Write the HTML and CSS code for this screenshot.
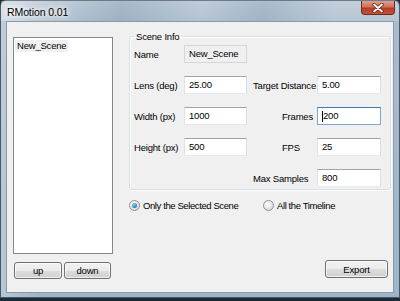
FILE: index.html
```html
<!DOCTYPE html>
<html>
<head>
<meta charset="utf-8">
<link rel="stylesheet" href="styles.css">
</head>
<body>
<div class="window">
  <div class="titlebar">
    <span class="title">RMotion 0.01</span>
    <div class="close"><svg width="14" height="10" viewBox="0 0 14 10"><path d="M3 1.5 L11 8.5 M11 1.5 L3 8.5" stroke="#5a2318" stroke-width="3.4" stroke-linecap="round"/><path d="M3 1.5 L11 8.5 M11 1.5 L3 8.5" stroke="#fff" stroke-width="1.8" stroke-linecap="round"/></svg></div>
  </div>
  <div class="client">
    <div class="left">
      <div class="list"><span class="item">New_Scene</span></div>
      <div class="btnrow">
        <button class="btn up">up</button>
        <button class="btn down">down</button>
      </div>
    </div>
    <div class="right">
      <fieldset class="group">
        <legend>Scene Info</legend>
        <div class="grid">
          <span class="lbl">Name</span>
          <span class="field ro">New_Scene</span>
          <span></span>
          <span></span>

          <span class="lbl">Lens (deg)</span>
          <span class="field">25.00</span>
          <span class="lbl">Target Distance</span>
          <span class="field">5.00</span>

          <span class="lbl">Width (px)</span>
          <span class="field">1000</span>
          <span class="lbl ind">Frames</span>
          <span class="field focus"><span class="caret"></span>200</span>

          <span class="lbl">Height (px)</span>
          <span class="field">500</span>
          <span class="lbl ind">FPS</span>
          <span class="field">25</span>

          <span></span>
          <span></span>
          <span class="lbl">Max Samples</span>
          <span class="field">800</span>
        </div>
      </fieldset>
      <div class="radios">
        <label class="radio first"><span class="dot on"></span>Only the Selected Scene</label>
        <label class="radio"><span class="dot"></span>All the Timeline</label>
      </div>
      <div class="spacer"></div>
      <div class="exportrow"><button class="btn export">Export</button></div>
    </div>
  </div>
</div>
</body>
</html>
```
FILE: styles.css
```css
html, body {
  margin: 0;
  padding: 0;
}
body {
  width: 400px;
  height: 301px;
  background: #1e2a36;
  overflow: hidden;
  font-family: "Liberation Sans", Arial, sans-serif;
  font-size: 9px;
  letter-spacing: -0.2px;
  color: #000;
}
.window {
  width: 400px;
  height: 298px;
  box-sizing: border-box;
  background:
    linear-gradient(90deg, rgba(255,255,255,0.25) 0px, rgba(255,255,255,0) 40px),
    linear-gradient(180deg, #b9c7d4 0px, #a9bccd 21px, #9fb4c8 100%);
  border: 1px solid #4a5866;
  border-top-color: #6d7b88;
  border-radius: 6px 6px 0 0;
  display: flex;
  flex-direction: column;
}
.titlebar {
  height: 20px;
  display: flex;
  align-items: flex-start;
  justify-content: space-between;
  background:
    linear-gradient(100deg, rgba(255,255,255,0.35) 0px, rgba(255,255,255,0.1) 60px, rgba(90,110,130,0.15) 120px, rgba(255,255,255,0.1) 200px, rgba(120,140,160,0.2) 260px, rgba(255,255,255,0.15) 330px);
}
.title {
  margin: 5px 0 0 6px;
  font-size: 10.5px;
  letter-spacing: -0.1px;
  color: #000;
  text-shadow: 0 0 4px #fff, 0 0 6px #fff, 0 0 8px #fff;
}
.close {
  width: 34px;
  height: 14px;
  margin-right: 4px;
  box-sizing: border-box;
  border: 1px solid #6b2a1e;
  border-top: none;
  border-radius: 0 0 4px 4px;
  background: linear-gradient(180deg, #e0a090 0%, #d0705a 45%, #b83c24 55%, #c65238 100%);
  display: flex;
  align-items: center;
  justify-content: center;
}
.client {
  margin: 0 5px;
  height: 272px;
  background: #f0f0f0;
  border: 1px solid #8b9aa8;
  box-sizing: border-box;
  display: flex;
  padding: 15px 0 0 6px;
}
.left {
  width: 100px;
  display: flex;
  flex-direction: column;
}
.list {
  height: 217px;
  box-sizing: border-box;
  background: #fff;
  border: 1px solid #828790;
  padding: 2px 1px;
}
.item {
  display: inline-block;
  background: #f0f0f0;
  padding: 0 2px;
  line-height: 12px;
  font-size: 9.5px;
}
.btnrow {
  margin-top: 8px;
  display: flex;
  gap: 2px;
  padding-left: 1px;
}
.btn {
  font-family: inherit;
  font-size: 9.5px;
  letter-spacing: -0.2px;
  color: #000;
  height: 17px;
  padding: 0;
  box-sizing: border-box;
  border: 1px solid #707070;
  border-radius: 3px;
  background: linear-gradient(180deg, #f2f2f2 0%, #ebebeb 50%, #dddddd 51%, #cfcfcf 100%);
  box-shadow: inset 0 0 0 1px rgba(255,255,255,0.7);
}
.up { width: 48px; }
.down { width: 47px; }
.right {
  margin-left: 16px;
  width: 262px;
  display: flex;
  flex-direction: column;
}
.group {
  margin: 0;
  padding: 0 0 0 4px;
  height: 159px;
  box-sizing: border-box;
  border: 1px solid #d5dfe5;
  border-radius: 3px;
  box-shadow: inset 1px 1px 0 #fff, 1px 1px 0 #fff;
  margin-top: -6px;
}
.group legend {
  padding: 0 2px;
  margin-left: 0;
  font-size: 9.5px;
  line-height: 11px;
}
.grid {
  display: grid;
  grid-template-columns: 50px 63px 70px 64px;
  grid-auto-rows: 18px;
  row-gap: 13px;
  margin-top: 3px;
  align-items: center;
}
.lbl {
  font-size: 9.5px;
  white-space: nowrap;
  padding-left: 0;
}
.grid .lbl:nth-child(4n+3) { padding-left: 6px; }
.grid .lbl.ind { padding-left: 35px; }
.field {
  height: 18px;
  box-sizing: border-box;
  background: #fff;
  border: 1px solid #abadb3;
  border-top-color: #a0a3aa;
  border-bottom-color: #e3e9ef;
  border-left-color: #e2e3ea;
  border-right-color: #dbdfe6;
  padding: 0 4px;
  font-size: 9.5px;
  line-height: 16px;
  display: flex;
  align-items: center;
}
.field.ro {
  background: #f0f0f0;
  border-color: #d6d6d6;
}
.field.focus {
  border-color: #7fa6c8;
  border-top-color: #3d7bad;
}
.caret {
  display: inline-block;
  width: 1px;
  height: 11px;
  background: #000;
}
.radios {
  display: flex;
  align-items: center;
  margin-top: 8px;
  height: 14px;
}
.radio {
  display: flex;
  align-items: center;
  font-size: 9.5px;
  letter-spacing: -0.4px;
  gap: 3px;
  white-space: nowrap;
}
.radio.first { width: 134px; }
.dot {
  flex: none;
  width: 11px;
  height: 11px;
  box-sizing: border-box;
  border-radius: 50%;
  border: 1px solid #8f8f8f;
  background: radial-gradient(circle at 40% 35%, #ffffff 0%, #e6e6e6 55%, #c9c9c9 100%);
  position: relative;
}
.dot.on::after {
  content: "";
  position: absolute;
  left: 2px;
  top: 2px;
  width: 5px;
  height: 5px;
  border-radius: 50%;
  background: radial-gradient(circle at 40% 35%, #8fd0f5 0%, #2a86c4 60%, #10507e 100%);
}
.spacer { flex: 1; }
.exportrow {
  display: flex;
  justify-content: flex-end;
  padding-right: 3px;
  margin-bottom: 14px;
}
.export { width: 63px; height: 18px; }
```
